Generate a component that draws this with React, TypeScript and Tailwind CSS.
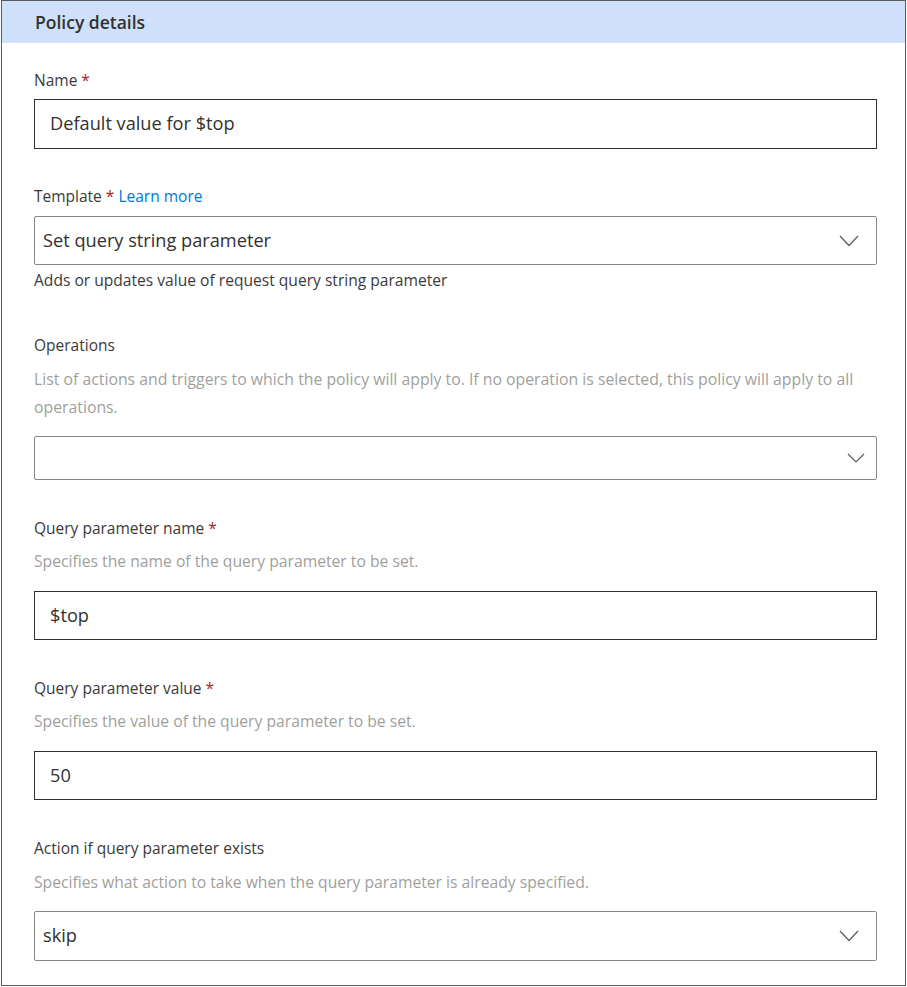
import React from "react";

const font = { fontFamily: '"Open Sans", "Noto Sans", sans-serif' };

function Chevron({ size = "lg" }: { size?: "lg" | "sm" }) {
  if (size === "sm") {
    return (
      <svg width="18" height="10" viewBox="0 0 18 10" className="shrink-0">
        <path d="M1 1 L9 9 L17 1" fill="none" stroke="#605e5c" strokeWidth="1.2" />
      </svg>
    );
  }
  return (
    <svg width="20" height="12" viewBox="0 0 20 12" className="shrink-0">
      <path d="M1 1 L10 10.5 L19 1" fill="none" stroke="#605e5c" strokeWidth="1.3" />
    </svg>
  );
}

function Req() {
  return <span className="text-[#a4262c]"> *</span>;
}

export default function App() {
  return (
    <div className="w-[907px] h-[987px] bg-white" style={font}>
      <div className="ml-[1px] w-[905px] h-[986px] border border-[#5a5a5a] flex flex-col">
        <div className="h-[42px] bg-[#cfe0fb] pl-[33px] flex items-center text-[17.5px] font-semibold text-[#323130]">
          Policy details
        </div>
        <div className="pl-[32px] pr-[28px] flex flex-col text-[#323130]">
          {/* Name */}
          <div className="mt-[27px] text-[15.5px] leading-[20px] text-[#3b3a39]">
            Name<Req />
          </div>
          <div className="mt-[9px] h-[50px] border border-[#323130] flex items-center pl-[15px] text-[18.2px]">
            Default value for $top
          </div>

          {/* Template */}
          <div className="mt-[37px] text-[15.5px] leading-[20px] text-[#3b3a39]">
            Template<Req /> <span className="text-[#0078d4]">Learn more</span>
          </div>
          <div className="mt-[10px] h-[49px] border border-[#8a8886] rounded-[2px] flex items-center justify-between pl-[8px] pr-[17px] text-[18.2px]">
            <span>Set query string parameter</span>
            <Chevron />
          </div>
          <div className="mt-[5px] text-[15.6px] leading-[20px] text-[#3b3a39]">
            Adds or updates value of request query string parameter
          </div>

          {/* Operations */}
          <div className="mt-[45px] text-[15.5px] leading-[20px] text-[#3b3a39]">Operations</div>
          <div className="mt-[10px] text-[15.8px] leading-[28px] text-[#a19f9d]">
            List of actions and triggers to which the policy will apply to. If no operation is selected, this policy will apply to all operations.
          </div>
          <div className="mt-[15px] h-[44px] border border-[#8a8886] rounded-[2px] flex items-center justify-end pr-[11px]">
            <Chevron size="sm" />
          </div>

          {/* Query parameter name */}
          <div className="mt-[38px] text-[15.5px] leading-[20px] text-[#3b3a39]">
            Query parameter name<Req />
          </div>
          <div className="mt-[9px] text-[15.7px] leading-[28px] text-[#a19f9d]">
            Specifies the name of the query parameter to be set.
          </div>
          <div className="mt-[16px] h-[49px] border border-[#323130] flex items-center pl-[15px] text-[18.2px]">
            $top
          </div>

          {/* Query parameter value */}
          <div className="mt-[38px] text-[15.5px] leading-[20px] text-[#3b3a39]">
            Query parameter value<Req />
          </div>
          <div className="mt-[9px] text-[15.7px] leading-[28px] text-[#a19f9d]">
            Specifies the value of the query parameter to be set.
          </div>
          <div className="mt-[16px] h-[49px] border border-[#323130] flex items-center pl-[15px] text-[18.2px]">
            50
          </div>

          {/* Action */}
          <div className="mt-[38px] text-[15.5px] leading-[20px] text-[#3b3a39]">Action if query parameter exists</div>
          <div className="mt-[10px] text-[15.7px] leading-[28px] text-[#a19f9d]">
            Specifies what action to take when the query parameter is already specified.
          </div>
          <div className="mt-[15px] h-[50px] border border-[#8a8886] rounded-[2px] flex items-center justify-between pl-[8px] pr-[17px] text-[18.2px]">
            <span>skip</span>
            <Chevron />
          </div>
        </div>
      </div>
    </div>
  );
}
